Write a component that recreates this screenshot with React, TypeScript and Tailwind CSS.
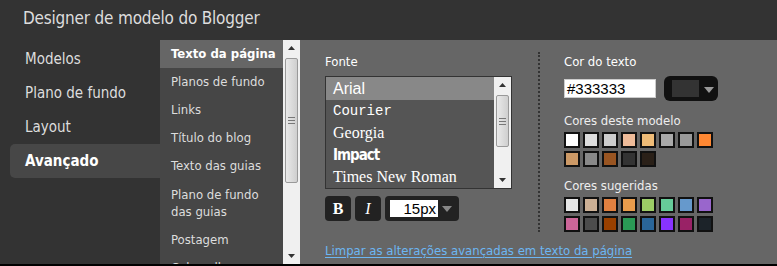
import React from 'react';

const ui = { fontFamily: '"DejaVu Sans Condensed", "DejaVu Sans", sans-serif' };

const navItems = ['Modelos', 'Plano de fundo', 'Layout', 'Avançado'];
const subItems = [
    'Texto da página',
    'Planos de fundo',
    'Links',
    'Título do blog',
    'Texto das guias',
    'Plano de fundo das guias',
    'Postagem',
    'Cabeçalhos',
];

const modelColors = ['#ffffff', '#dddddd', '#cccccc', '#eebb99', '#eebb77', '#aaaaaa', '#999999', '#ff8833', '#cc9966', '#888888', '#995522', '#333333', '#2a2018'];
const suggestedColors = ['#e6e6e6', '#ccb095', '#e08040', '#e89c4c', '#9ccc66', '#66cc99', '#6699cc', '#9966cc', '#cc6699', '#4c4c4c', '#994000', '#2a9955', '#2a6699', '#8833ff', '#992266', '#1c2329'];

function Arrow({ up }: { up?: boolean }) {
    return (
        <svg width="7" height="4" viewBox="0 0 7 4" className="block">
            {up ? <path d="M0 4 L3.5 0 L7 4 Z" fill="#333" /> : <path d="M0 0 L3.5 4 L7 0 Z" fill="#333" />}
        </svg>
    );
}

function Scrollbar({ thumbTop, thumbHeight }: { thumbTop: number; thumbHeight: number }) {
    return (
        <div className="relative h-full w-[17px] shrink-0 bg-[#f0f0f0] flex flex-col items-center justify-between py-[6px]">
            <Arrow up />
            <Arrow />
            <div
                className="absolute left-[2px] right-[2px] rounded-[2px] border border-[#999] bg-gradient-to-r from-[#eaeaea] via-[#dcdcdc] to-[#cfcfcf] flex flex-col items-center justify-center gap-[2px]"
                style={{ top: thumbTop, height: thumbHeight }}
            >
                <div className="w-[7px] h-px bg-[#777]" />
                <div className="w-[7px] h-px bg-[#777]" />
                <div className="w-[7px] h-px bg-[#777]" />
            </div>
        </div>
    );
}

function Swatches({ colors }: { colors: string[] }) {
    return (
        <div className="grid grid-cols-[repeat(8,16px)] gap-[3px] mt-[3px]">
            {colors.map((c, i) => (
                <div key={i} className="w-[16px] h-[16px] border-2 border-[#111]" style={{ background: c }} />
            ))}
        </div>
    );
}

export default function App() {
    return (
        <div className="w-[777px] h-[266px] overflow-hidden bg-[#333] flex flex-col border-b-2 border-black" style={ui}>
            {/* Header */}
            <div className="h-[40px] shrink-0 flex items-center pl-[23px] pb-[3px] text-[17px] text-[#ddd] tracking-[-0.2px]">
                Designer de modelo do Blogger
            </div>

            <div className="flex flex-1 min-h-0">
                {/* Main nav */}
                <div className="w-[160px] shrink-0 pl-[10px] pt-[2px]">
                    {navItems.map((n) => (
                        <div
                            key={n}
                            className={`h-[34px] flex items-center pl-[15px] text-[15px] ${n === 'Avançado' ? 'bg-[#474747] rounded-l-[5px] font-bold text-white' : 'text-[#ddd]'}`}
                        >
                            {n}
                        </div>
                    ))}
                </div>

                {/* Sub nav */}
                <div className="w-[123px] shrink-0 bg-[#464646] overflow-hidden">
                    {subItems.map((s, i) => (
                        <div
                            key={s}
                            className={`px-[11px] py-[6px] text-[13px] whitespace-nowrap ${s === 'Plano de fundo das guias' ? 'leading-[17px]' : 'leading-[16px]'} ${i === 0 ? 'bg-[#666] font-bold text-white' : 'text-[#ddd]'}`}
                        >
                            {s === 'Plano de fundo das guias' ? (
                                <>
                                    Plano de fundo
                                    <br />
                                    das guias
                                </>
                            ) : (
                                s
                            )}
                        </div>
                    ))}
                </div>
                <Scrollbar thumbTop={18} thumbHeight={125} />

                {/* Panel */}
                <div className="flex-1 bg-[#666] pl-[25px] pt-[12px] flex flex-col">
                    <div className="flex">
                        <div className="w-[213px] shrink-0 pt-[2px]">
                            <div className="text-[13px] leading-[16px] text-white">Fonte</div>
                            <div className="mt-[6px] w-[187px] h-[113px] border border-[#333] bg-[#555] flex">
                                <div className="flex-1 flex flex-col text-white">
                                    <div className="h-[23px] bg-[#888] pl-[7px] flex items-center text-[16px]" style={{ fontFamily: '"Liberation Sans", Arial, sans-serif' }}>Arial</div>
                                    <div className="h-[22px] pl-[7px] flex items-center text-[14px]" style={{ fontFamily: '"Liberation Mono", monospace' }}>Courier</div>
                                    <div className="h-[22px] pl-[7px] flex items-center text-[16px]" style={{ fontFamily: '"Liberation Serif", serif' }}>Georgia</div>
                                    <div className="h-[22px] pl-[7px] flex items-center text-[15px] font-bold tracking-[-1px]" style={{ fontFamily: '"DejaVu Sans Condensed", "Liberation Sans Narrow", sans-serif' }}>Impact</div>
                                    <div className="h-[22px] pl-[7px] flex items-center text-[16px]" style={{ fontFamily: '"Liberation Serif", serif' }}>Times New Roman</div>
                                </div>
                                <Scrollbar thumbTop={18} thumbHeight={52} />
                            </div>
                            <div className="mt-[7px] flex gap-[4px] h-[25px]">
                                <div className="w-[26px] rounded-[4px] bg-[#222] flex items-center justify-center text-white text-[16px] font-bold" style={{ fontFamily: '"Liberation Serif", serif' }}>B</div>
                                <div className="w-[26px] rounded-[4px] bg-[#222] flex items-center justify-center text-white text-[16px] italic" style={{ fontFamily: '"Liberation Serif", serif' }}>I</div>
                                <div className="w-[74px] rounded-[4px] bg-[#222] flex items-center pl-[5px] gap-[4px]">
                                    <div className="w-[48px] h-[17px] bg-white text-right pr-[2px] text-[15px] leading-[17px] text-black" style={{ fontFamily: '"Liberation Sans", Arial, sans-serif' }}>15px</div>
                                    <svg width="10" height="6" viewBox="0 0 10 6"><path d="M0 0 L5 6 L10 0 Z" fill="#888" /></svg>
                                </div>
                            </div>
                        </div>

                        <div className="border-l-2 border-dotted border-[#333] self-stretch" />

                        <div className="pl-[24px] pt-[2px]">
                            <div className="text-[13px] leading-[16px] text-white">Cor do texto</div>
                            <div className="mt-[6px] flex items-center gap-[8px]">
                                <div className="w-[92px] h-[19px] bg-white border border-[#ccc] pl-[2px] text-[15px] leading-[17px] text-black" style={{ fontFamily: '"Liberation Sans", Arial, sans-serif' }}>#333333</div>
                                <div className="w-[54px] h-[25px] rounded-[6px] bg-[#111] flex items-center pl-[8px] gap-[5px]">
                                    <div className="w-[27px] h-[17px] bg-[#333]" />
                                    <svg width="10" height="6" viewBox="0 0 10 6" className="mt-[3px]"><path d="M0 0 L5 6 L10 0 Z" fill="#999" /></svg>
                                </div>
                            </div>
                            <div className="mt-[12px] text-[13px] leading-[16px] text-[#eee]">Cores deste modelo</div>
                            <Swatches colors={modelColors} />
                            <div className="mt-[11px] text-[13px] leading-[16px] text-[#eee]">Cores sugeridas</div>
                            <Swatches colors={suggestedColors} />
                        </div>
                    </div>
                    <a className="mt-[11px] text-[13px] leading-[16px] text-[#6cb6f3] underline underline-offset-2 whitespace-nowrap">
                        Limpar as alterações avançadas em texto da página
                    </a>
                </div>
            </div>
        </div>
    );
}
